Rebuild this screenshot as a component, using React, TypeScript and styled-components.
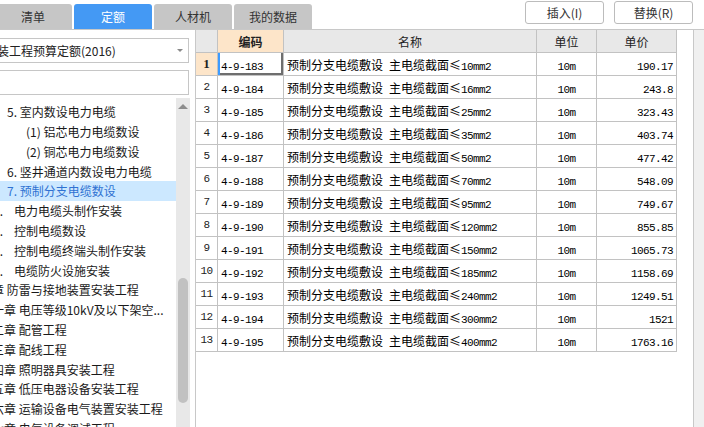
import React from 'react';
import styled, { createGlobalStyle } from 'styled-components';

const GlobalStyle = createGlobalStyle`
  html, body { margin: 0; padding: 0; background: #fff; }
  body {
    font-family: "Noto Sans CJK SC", "Noto Sans", sans-serif;
    font-size: 12px;
    color: #1e1e1e;
  }
  * { box-sizing: border-box; }
`;

const Screen = styled.div`
  width: 704px;
  height: 427px;
  display: flex;
  flex-direction: column;
  overflow: hidden;
  background: #fff;
`;

const TopBar = styled.div`
  height: 29px;
  flex-shrink: 0;
  display: flex;
  justify-content: space-between;
  align-items: flex-start;
`;

const Tabs = styled.div`
  display: flex;
  gap: 2px;
  margin-left: -6px;
  align-self: flex-end;
`;

const Tab = styled.div<{ $active?: boolean }>`
  width: 78px;
  height: 25px;
  border-radius: 3px 3px 0 0;
  background: ${p => (p.$active ? '#4499f4' : '#c6c6c6')};
  color: ${p => (p.$active ? '#ffffff' : '#333333')};
  display: flex;
  align-items: center;
  justify-content: center;
  font-size: 12px;
`;

const Actions = styled.div`
  display: flex;
  gap: 10px;
  margin-top: 1px;
  margin-right: 11px;
`;

const ActionButton = styled.button`
  width: 79px;
  height: 23px;
  border: 1px solid #bcbcbc;
  border-radius: 3px;
  background: #ffffff;
  color: #333;
  font-family: "Noto Sans CJK SC", "Noto Sans", sans-serif;
  font-size: 12px;
  padding: 0;
  display: flex;
  align-items: center;
  justify-content: center;
`;

const Main = styled.div`
  flex: 1;
  min-height: 0;
  display: flex;
  border-top: 1px solid #c8c8c8;
`;

const LeftPanel = styled.div`
  width: 195px;
  flex-shrink: 0;
  display: flex;
  flex-direction: column;
  padding-top: 8px;
  overflow: hidden;
`;

const Dropdown = styled.div`
  margin-left: -30px;
  width: 219px;
  height: 25px;
  flex-shrink: 0;
  border: 1px solid #c6c6c6;
  display: flex;
  align-items: center;
  justify-content: space-between;
  padding: 0 5px 0 14px;
  white-space: nowrap;
  color: #222;
`;

const Caret = styled.span`
  width: 0;
  height: 0;
  border-left: 3px solid transparent;
  border-right: 3px solid transparent;
  border-top: 3px solid #8a8a8a;
`;

const SearchBox = styled.div`
  margin-left: -30px;
  margin-top: 7px;
  width: 219px;
  height: 25px;
  flex-shrink: 0;
  border: 1px solid #c6c6c6;
`;

const TreeArea = styled.div`
  flex: 1;
  min-height: 0;
  display: flex;
  margin-top: 3px;
`;

const TreeViewport = styled.div`
  flex: 1;
  min-width: 0;
  overflow: hidden;
  padding-top: 3.8px;
`;

const TreeContent = styled.div`
  margin-left: -40px;
`;

const TreeRow = styled.div<{ $indent: number; $selected?: boolean }>`
  height: 19.8px;
  display: flex;
  align-items: center;
  padding-left: ${p => p.$indent}px;
  white-space: nowrap;
  overflow: hidden;
  background: ${p => (p.$selected ? '#cce8ff' : 'transparent')};
  color: ${p => (p.$selected ? '#2f72d2' : '#1a1a1a')};
  font-size: 12px;
`;

const TreeNum = styled.span<{ $width: number }>`
  display: inline-block;
  width: ${p => p.$width}px;
  text-align: right;
  flex-shrink: 0;
  margin-right: 11px;
`;

const Scrollbar = styled.div`
  width: 14px;
  margin-right: 5px;
  flex-shrink: 0;
  background: #e8e8e8;
  display: flex;
  flex-direction: column;
  align-items: center;
`;

const ScrollArrow = styled.div`
  height: 16px;
  display: flex;
  align-items: center;
  justify-content: center;
  &::before {
    content: '';
    width: 0;
    height: 0;
    border-left: 5px solid transparent;
    border-right: 5px solid transparent;
    border-bottom: 5px solid #8c8c8c;
  }
`;

const ScrollThumb = styled.div<{ $offset: number; $size: number }>`
  margin-top: ${p => p.$offset}px;
  width: 10px;
  height: ${p => p.$size}px;
  border-radius: 5px;
  background: #c1c1c1;
`;

const RightPanel = styled.div`
  width: 499px;
  flex-shrink: 0;
  border-left: 1px solid #c8c8c8;
  border-right: 1px solid #c8c8c8;
  display: flex;
  background: #fff;
`;

const OuterGutter = styled.div`
  flex: 1;
  background: #f0f0f0;
`;

const Grid = styled.div`
  width: 481px;
  display: flex;
  flex-direction: column;
`;

const GridRow = styled.div`
  display: grid;
  grid-template-columns: 22px 66px 253px 60px 80px;
  height: 23px;
`;

const Cell = styled.div<{ $align?: 'left' | 'center' | 'right'; $bg?: string; $bold?: boolean; $current?: boolean }>`
  border-right: 1px solid #c2c2c2;
  border-bottom: 1px solid #c2c2c2;
  background: ${p => p.$bg || '#ffffff'};
  display: flex;
  align-items: center;
  justify-content: ${p => (p.$align === 'center' ? 'center' : p.$align === 'right' ? 'flex-end' : 'flex-start')};
  padding: ${p => (p.$align === 'right' ? '0 3px 0 3px' : p.$align === 'center' ? '0' : '0 3px')};
  white-space: nowrap;
  overflow: hidden;
  color: #000;
  font-weight: ${p => (p.$bold ? 700 : 400)};
  box-shadow: ${p => (p.$current ? 'inset 2px 0 0 #3d9bff, inset -2px -2px 0 #6e6e6e' : 'none')};
`;

const HeadText = styled.span`
  font-size: 12px;
  color: #222;
`;

const Ascii = styled.span`
  font-family: "Liberation Mono", monospace;
  font-size: 11px;
  letter-spacing: -0.6px;
  white-space: pre;
`;

const RowNo = styled.span<{ $strong?: boolean }>`
  font-family: ${p => (p.$strong ? '"Liberation Serif", serif' : '"Liberation Mono", monospace')};
  font-size: ${p => (p.$strong ? '13px' : '11px')};
  letter-spacing: ${p => (p.$strong ? '0' : '-0.6px')};
  font-weight: ${p => (p.$strong ? 700 : 400)};
  color: #222;
`;

const CellText = styled.span`
  white-space: pre;
`;

const Filler = styled.div`
  flex: 1;
`;

const GridScrollTrack = styled.div`
  flex: 1;
  background: #fff;
`;

function Mixed({ text }: { text: string }) {
  const parts = text.split(/([\x20-\x7E]+)/).filter(Boolean);
  return (
    <CellText>
      {parts.map((p, i) =>
        /^[\x20-\x7E]+$/.test(p) ? <Ascii key={i}>{p}</Ascii> : <span key={i}>{p}</span>
      )}
    </CellText>
  );
}

type TreeItem = { indent: number; text: string; num?: string; numWidth?: number; selected?: boolean };

const treeItems: TreeItem[] = [
  { indent: 47, text: '5. 室内数设电力电缆' },
  { indent: 66, text: '(1) 铝芯电力电缆数设' },
  { indent: 66, text: '(2) 铜芯电力电缆数设' },
  { indent: 47, text: '6. 竖井通道内数设电力电缆' },
  { indent: 47, text: '7. 预制分支电缆数设', selected: true },
  { indent: 0, num: '8.', numWidth: 43, text: '电力电缆头制作安装' },
  { indent: 0, num: '9.', numWidth: 43, text: '控制电缆数设' },
  { indent: 0, num: '10.', numWidth: 43, text: '控制电缆终端头制作安装' },
  { indent: 0, num: '11.', numWidth: 43, text: '电缆防火设施安装' },
  { indent: 8, text: '第九章 防雷与接地装置安装工程' },
  { indent: 8, text: '第十一章 电压等级10kV及以下架空...' },
  { indent: 8, text: '第十二章 配管工程' },
  { indent: 8, text: '第十三章 配线工程' },
  { indent: 8, text: '第十四章 照明器具安装工程' },
  { indent: 8, text: '第十五章 低压电器设备安装工程' },
  { indent: 8, text: '第十六章 运输设备电气装置安装工程' },
  { indent: 8, text: '第十七章 电气设备调试工程' },
];

const rows: [string, string, string][] = [
  ['4-9-183', '10', '190.17'],
  ['4-9-184', '16', '243.8'],
  ['4-9-185', '25', '323.43'],
  ['4-9-186', '35', '403.74'],
  ['4-9-187', '50', '477.42'],
  ['4-9-188', '70', '548.09'],
  ['4-9-189', '95', '749.67'],
  ['4-9-190', '120', '855.85'],
  ['4-9-191', '150', '1065.73'],
  ['4-9-192', '185', '1158.69'],
  ['4-9-193', '240', '1249.51'],
  ['4-9-194', '300', '1521'],
  ['4-9-195', '400', '1763.16'],
];

const PEACH = '#fde5c9';
const HEAD = '#e8e8e8';

export default function App() {
  return (
    <>
      <GlobalStyle />
      <Screen>
        <TopBar>
          <Tabs>
            <Tab>清单</Tab>
            <Tab $active>定额</Tab>
            <Tab>人材机</Tab>
            <Tab>我的数据</Tab>
          </Tabs>
          <Actions>
            <ActionButton>插入(I)</ActionButton>
            <ActionButton>替换(R)</ActionButton>
          </Actions>
        </TopBar>
        <Main>
          <LeftPanel>
            <Dropdown>
              <span>安装工程预算定额(2016)</span>
              <Caret />
            </Dropdown>
            <SearchBox />
            <TreeArea>
              <TreeViewport>
                <TreeContent>
                  {treeItems.map((it, i) => (
                    <TreeRow key={i} $indent={it.indent} $selected={it.selected}>
                      {it.num && <TreeNum $width={it.numWidth || 0}>{it.num}</TreeNum>}
                      <span>{it.text}</span>
                    </TreeRow>
                  ))}
                </TreeContent>
              </TreeViewport>
              <Scrollbar>
                <ScrollArrow />
                <ScrollThumb $offset={164} $size={125} />
              </Scrollbar>
            </TreeArea>
          </LeftPanel>
          <RightPanel>
            <Grid>
              <GridRow>
                <Cell $bg={HEAD} />
                <Cell $bg={PEACH} $align="center" $bold>
                  <HeadText>编码</HeadText>
                </Cell>
                <Cell $bg={HEAD} $align="center">
                  <HeadText>名称</HeadText>
                </Cell>
                <Cell $bg={HEAD} $align="center">
                  <HeadText>单位</HeadText>
                </Cell>
                <Cell $bg={HEAD} $align="center">
                  <HeadText>单价</HeadText>
                </Cell>
              </GridRow>
              {rows.map(([code, size, price], i) => (
                <GridRow key={code}>
                  <Cell $align="center" $bg={i === 0 ? PEACH : undefined}>
                    <RowNo $strong={i === 0}>{i + 1}</RowNo>
                  </Cell>
                  <Cell $current={i === 0}>
                    <Mixed text={code} />
                  </Cell>
                  <Cell>
                    <Mixed text={`预制分支电缆敷设 主电缆截面≤${size}mm2`} />
                  </Cell>
                  <Cell $align="center">
                    <Mixed text="10m" />
                  </Cell>
                  <Cell $align="right">
                    <Mixed text={price} />
                  </Cell>
                </GridRow>
              ))}
              <Filler />
            </Grid>
            <GridScrollTrack />
          </RightPanel>
          <OuterGutter />
        </Main>
      </Screen>
    </>
  );
}
